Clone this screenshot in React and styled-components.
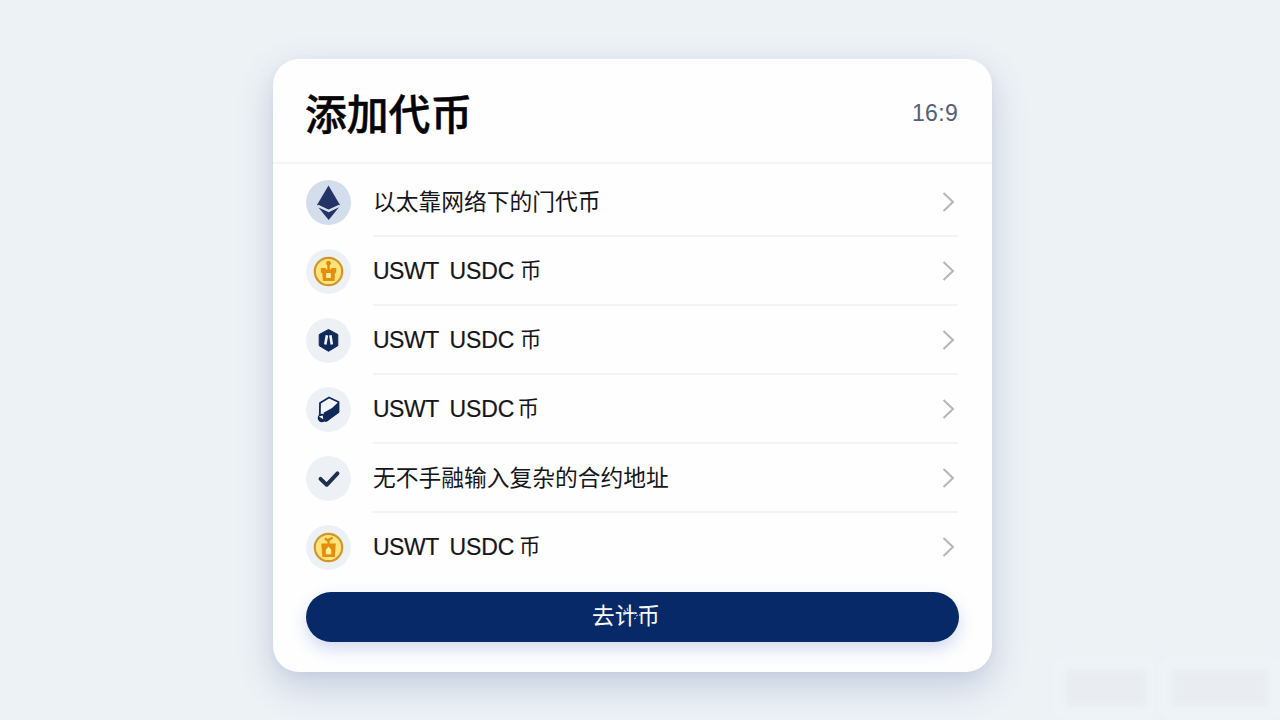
import React from "react";
import styled, { createGlobalStyle } from "styled-components";

const GlobalStyle = createGlobalStyle`
  * { box-sizing: border-box; }
  html, body { margin: 0; padding: 0; }
  body { font-family: "Liberation Sans", "Noto Sans CJK SC", sans-serif; }
`;

const Page = styled.main`
  position: relative;
  width: 1280px;
  height: 720px;
  padding: 59px 0 0 273px;
  overflow: hidden;
  background: #edf2f5;
`;

const Card = styled.section`
  width: 719px;
  height: 613px;
  border-radius: 26px;
  background: #fefefe;
  box-shadow: 0 14px 36px rgba(62, 84, 150, 0.23), 0 2px 8px rgba(62, 84, 150, 0.05);
`;

const Header = styled.header`
  display: flex;
  justify-content: space-between;
  height: 105px;
  padding: 0 34px 0 32px;
  border-bottom: 2px solid #f4f5f7;
`;

const Title = styled.h1`
  margin: 0;
  padding-top: 23px;
  font: 500 41.8px/60px "Noto Sans CJK SC", sans-serif;
  -webkit-text-stroke: 0.5px #050507;
  color: #050507;
`;

const Ratio = styled.span`
  padding-top: 40px;
  font-size: 23px;
  line-height: 28px;
  letter-spacing: 0.3px;
  color: #565f76;
`;

const List = styled.ul`
  margin: 0;
  padding: 4px 34px 0 33px;
  list-style: none;
`;

const Row = styled.li`
  display: flex;
  align-items: center;
  height: 69px;
`;

const Badge = styled.span`
  display: flex;
  flex: none;
  width: 45px;
  height: 45px;
  margin: 0 22px 1px 0;
  border-radius: 50%;
  background: ${(p) => p.$tint || "#edf1f6"};
  svg { display: block; }
`;

const RowBody = styled.div`
  display: flex;
  flex: 1;
  align-items: center;
  justify-content: space-between;
  height: 100%;
  border-bottom: ${(p) => (p.$last ? "2px solid transparent" : "2px solid #f2f3f5")};
`;

const Label = styled.span`
  display: flex;
  align-items: center;
  padding-bottom: ${(p) => (p.$raised ? 1 : 0)}px;
  font: 400 22.75px/34px "Noto Sans CJK SC", sans-serif;
  color: #15161a;
  white-space: nowrap;
`;

const Ticker = styled.span`
  width: ${(p) => p.$width}px;
  font-family: "Liberation Sans", sans-serif;
  font-size: 23px;
  letter-spacing: ${(p) => p.$tracking || 0}px;
  -webkit-text-stroke: 0.2px #15161a;
`;

const Unit = styled.span`
  padding-bottom: 4px;
  font-size: 21.5px;
`;

const Chevron = styled.svg`
  width: 16px;
  height: 22px;
  margin-right: 2.5px;
`;

const Action = styled.button`
  position: relative;
  display: block;
  width: 653px;
  height: 50px;
  margin: 9.5px 0 0 33px;
  padding: 0 13px 4px 0;
  border: 0;
  border-radius: 25px;
  background: #082967;
  box-shadow: 0 7px 16px rgba(70, 105, 200, 0.24);
  font: 400 22.7px/46px "Noto Sans CJK SC", sans-serif;
  color: #f6f8fc;
`;

const Specks = styled.svg`
  position: absolute;
  top: 15px;
  left: 316px;
  width: 20px;
  height: 20px;
`;

const Smudge = styled.div`
  position: absolute;
  top: 668px;
  left: ${(p) => p.$left}px;
  width: ${(p) => p.$width}px;
  height: 40px;
  background: #e9edf1;
  box-shadow: 0 0 3px 8px #eff4f8;
  filter: blur(5px);
`;

const Ethereum = () => (
  <svg width="45" height="45" viewBox="0 0 45 45">
    <path d="M22.5 5.5 34 25l-11.3 5.2L11 25z" fill="#243466" />
    <path d="m12.5 27.5 10.2 4.8L33 27.2 22.7 40z" fill="#243466" />
    <path d="m12 25.5 10.5 5 10.8-5" fill="none" stroke="#dae3f0" strokeWidth="1.5" />
  </svg>
);

const Coin = ({ sprout }) => (
  <svg width="45" height="45" viewBox="0 0 45 45">
    <circle cx="22.5" cy="22.5" r="13.7" fill="#ffe47c" stroke="#d1962b" strokeWidth="2.2" />
    {sprout ? (
      <>
        <path d="M22.5 19v-5M22 15.5l-3.2-2M22 15.2l4.5-2.5" fill="none" stroke="#df8b0b" strokeWidth="2.3" />
        <path d="M15.2 18.5h14.6l-1 13.5H16.4z" fill="#e48e0b" />
        <path d="M19.8 29.2v-4.5l2.7-3.2 2.7 3.2v4.5z" fill="#fff0a0" />
      </>
    ) : (
      <>
        <circle cx="22.5" cy="14.2" r="2.4" fill="#df8b0b" />
        <path d="M22.5 15v6" stroke="#df8b0b" strokeWidth="2.4" />
        <path d="M14.8 19h4.6l1 1.5h4.2l1-1.5h4.6v4.2l-1.3 1-.4 7.8H16.9l-.6-7.8-1.5-1z" fill="#e48e0b" />
        <path d="M20.2 24h4.6v5h-4.6z" fill="#fff0a0" />
      </>
    )}
  </svg>
);

const Hexagon = () => (
  <svg width="45" height="45" viewBox="0 0 45 45">
    <path d="m22.5 11.5 9.3 5v11.2l-9.3 5.6-9.3-5.6V16.5z" fill="#102959" stroke="#102959" strokeLinejoin="round" />
    <path d="m20.9 17.2-1.6 9.3M24.4 17.2l1.4 9.3" fill="none" stroke="#f1f4fa" strokeWidth="2.6" />
  </svg>
);

const Box = () => (
  <svg width="45" height="45" viewBox="0 0 45 45">
    <path d="m14 16 9-5.5 9.5 4.5v10L19.3 34l-5.5-6z" fill="#f5f7fb" stroke="#102959" strokeWidth="1.8" strokeLinejoin="round" />
    <path d="M33 14.5v11L20.5 35l-3-9.2 8.5-4.8z" fill="#102959" />
    <circle cx="15.9" cy="31" r="4.2" fill="#102959" />
    <path d="m12.8 29.6 4-1 .4 3.6z" fill="#f7f9fd" />
  </svg>
);

const Check = () => (
  <svg width="45" height="45" viewBox="0 0 45 45">
    <path d="m14.5 22.8 6.2 6L31.5 17.4" fill="none" stroke="#202e4d" strokeWidth="3.9" strokeLinecap="round" strokeLinejoin="round" />
  </svg>
);

const items = [
  { icon: <Ethereum />, tint: "#d3ddec", text: "以太靠网络下的门代币" },
  { icon: <Coin />, unitAt: 70.5 },
  { icon: <Hexagon />, unitAt: 70.5 },
  { icon: <Box />, unitAt: 68 },
  { icon: <Check />, text: "无不手融输入复杂的合约地址" },
  { icon: <Coin sprout />, unitAt: 69.5 },
];

export default function App() {
  return (
    <Page>
      <GlobalStyle />
      <Card>
        <Header>
          <Title>添加代币</Title>
          <Ratio>16:9</Ratio>
        </Header>
        <List>
          {items.map((item, i) => (
            <Row key={i}>
              <Badge $tint={item.tint}>{item.icon}</Badge>
              <RowBody $last={i === items.length - 1}>
                <Label $raised={Boolean(item.text)}>
                  {item.text || (
                    <>
                      <Ticker $width={76.5} $tracking={-0.5}>USWT</Ticker>
                      <Ticker $width={item.unitAt} $tracking={-0.1}>USDC</Ticker>
                      <Unit>币</Unit>
                    </>
                  )}
                </Label>
                <Chevron viewBox="0 0 16 22">
                  <path d="m3.5 2 9.5 9-9.5 9" fill="none" stroke="#b4b5b9" strokeWidth="2" />
                </Chevron>
              </RowBody>
            </Row>
          ))}
        </List>
        <Action>
          去计币
          <Specks viewBox="0 0 20 20">
            <path d="m2 3 2 2M5 1l1 3M1 8l3-1M11 5l2 2M14 9l2-1M17 8h2M12 12l2-1" stroke="#a9b9dd" strokeWidth="1.3" />
          </Specks>
        </Action>
      </Card>
      <Smudge $left={1064} $width={84} />
      <Smudge $left={1170} $width={100} />
    </Page>
  );
}
